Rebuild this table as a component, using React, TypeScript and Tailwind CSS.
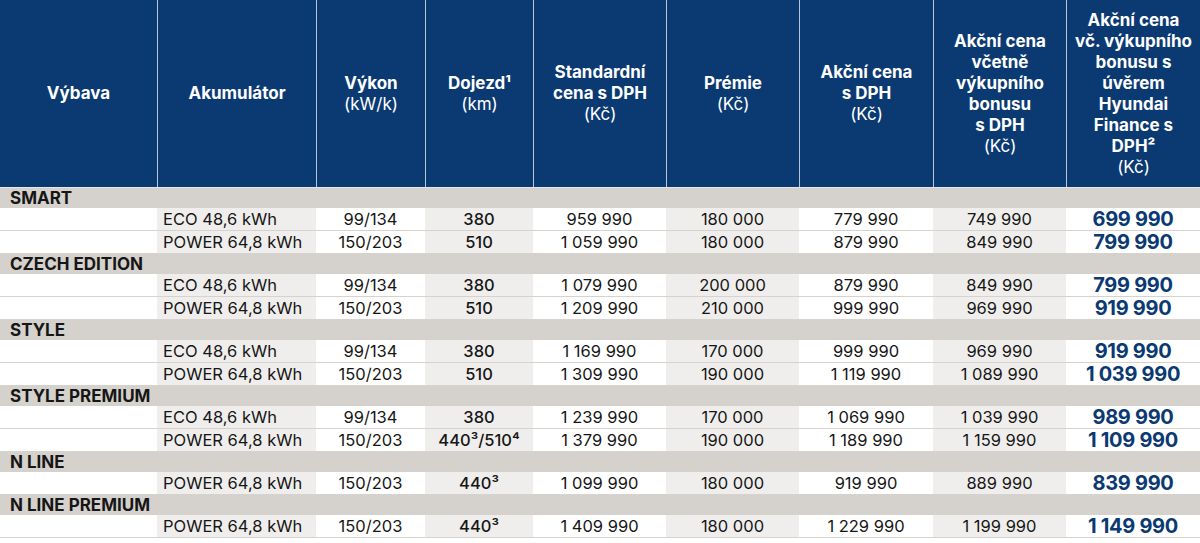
import React from "react";

type Row = {
  acc: string;
  power: string;
  range: React.ReactNode;
  std: string;
  prem: string;
  akce: string;
  vyk: string;
  fin: string;
};

type Group = { name: string; rows: Row[] };

const ECO = "ECO 48,6 kWh";
const PWR = "POWER 64,8 kWh";

const groups: Group[] = [
  {
    name: "SMART",
    rows: [
      { acc: ECO, power: "99/134", range: "380", std: "959 990", prem: "180 000", akce: "779 990", vyk: "749 990", fin: "699 990" },
      { acc: PWR, power: "150/203", range: "510", std: "1 059 990", prem: "180 000", akce: "879 990", vyk: "849 990", fin: "799 990" },
    ],
  },
  {
    name: "CZECH EDITION",
    rows: [
      { acc: ECO, power: "99/134", range: "380", std: "1 079 990", prem: "200 000", akce: "879 990", vyk: "849 990", fin: "799 990" },
      { acc: PWR, power: "150/203", range: "510", std: "1 209 990", prem: "210 000", akce: "999 990", vyk: "969 990", fin: "919 990" },
    ],
  },
  {
    name: "STYLE",
    rows: [
      { acc: ECO, power: "99/134", range: "380", std: "1 169 990", prem: "170 000", akce: "999 990", vyk: "969 990", fin: "919 990" },
      { acc: PWR, power: "150/203", range: "510", std: "1 309 990", prem: "190 000", akce: "1 119 990", vyk: "1 089 990", fin: "1 039 990" },
    ],
  },
  {
    name: "STYLE PREMIUM",
    rows: [
      { acc: ECO, power: "99/134", range: "380", std: "1 239 990", prem: "170 000", akce: "1 069 990", vyk: "1 039 990", fin: "989 990" },
      { acc: PWR, power: "150/203", range: "440³/510⁴", std: "1 379 990", prem: "190 000", akce: "1 189 990", vyk: "1 159 990", fin: "1 109 990" },
    ],
  },
  {
    name: "N LINE",
    rows: [
      { acc: PWR, power: "150/203", range: "440³", std: "1 099 990", prem: "180 000", akce: "919 990", vyk: "889 990", fin: "839 990" },
    ],
  },
  {
    name: "N LINE PREMIUM",
    rows: [
      { acc: PWR, power: "150/203", range: "440³", std: "1 409 990", prem: "180 000", akce: "1 229 990", vyk: "1 199 990", fin: "1 149 990" },
    ],
  },
];

const GRID =
  "grid grid-cols-[157px_159px_109px_108px_133px_133px_134px_133px_134px]";

function HeadCell({ children, first }: { children: React.ReactNode; first?: boolean }) {
  return (
    <div
      className={
        "flex items-center justify-center text-center text-white text-[17px] leading-[21px] " +
        (first ? "" : "border-l border-[#b9c5d6]")
      }
    >
      <div>{children}</div>
    </div>
  );
}

const B = ({ children }: { children: React.ReactNode }) => (
  <span className="font-bold">{children}</span>
);

export default function App() {
  return (
    <div
      className="w-[1200px] h-[543px] bg-white overflow-hidden text-[#161616]"
      style={{ fontFamily: 'Inter, "Noto Sans", sans-serif' }}
    >
      <div className={GRID + " h-[187px] bg-[#0b3a72]"}>
        <HeadCell first>
          <B>Výbava</B>
        </HeadCell>
        <HeadCell>
          <B>Akumulátor</B>
        </HeadCell>
        <HeadCell>
          <B>Výkon</B>
          <br />
          (kW/k)
        </HeadCell>
        <HeadCell>
          <B>Dojezd¹</B>
          <br />
          (km)
        </HeadCell>
        <HeadCell>
          <B>
            Standardní
            <br />
            cena s DPH
          </B>
          <br />
          (Kč)
        </HeadCell>
        <HeadCell>
          <B>Prémie</B>
          <br />
          (Kč)
        </HeadCell>
        <HeadCell>
          <B>
            Akční cena
            <br />s DPH
          </B>
          <br />
          (Kč)
        </HeadCell>
        <HeadCell>
          <B>
            Akční cena
            <br />
            včetně
            <br />
            výkupního
            <br />
            bonusu
            <br />s DPH
          </B>
          <br />
          (Kč)
        </HeadCell>
        <HeadCell>
          <B>
            Akční cena
            <br />
            vč. výkupního
            <br />
            bonusu s
            <br />
            úvěrem
            <br />
            Hyundai
            <br />
            Finance s
            <br />
            DPH²
          </B>
          <br />
          (Kč)
        </HeadCell>
      </div>
      <div className="h-[1px] bg-[#e4e7ec]" />
      {groups.map((g) => (
        <div key={g.name}>
          <div className="h-[20px] bg-[#d5d1cc] flex items-center pl-[10px] text-[17px] font-bold leading-[20px] text-[#161616]">
            {g.name}
          </div>
          {g.rows.map((r, i) => (
            <div
              key={i}
              className={GRID + " h-[23px] border-b border-[#d6d3cf] text-[16.5px] leading-[22px]"}
            >
              <div className="bg-white" />
              <div className="bg-[#efeeec] flex items-center pl-[6px]">{r.acc}</div>
              <div className="bg-white flex items-center justify-center">{r.power}</div>
              <div className="bg-[#efeeec] flex items-center justify-center font-medium">
                {r.range}
              </div>
              <div className="bg-white flex items-center justify-center">{r.std}</div>
              <div className="bg-[#efeeec] flex items-center justify-center">{r.prem}</div>
              <div className="bg-white flex items-center justify-center">{r.akce}</div>
              <div className="bg-[#efeeec] flex items-center justify-center">{r.vyk}</div>
              <div className="bg-white flex items-center justify-center font-bold text-[20px] leading-[22px] tracking-[-0.3px] text-[#0b3a72]">
                {r.fin}
              </div>
            </div>
          ))}
        </div>
      ))}
    </div>
  );
}
